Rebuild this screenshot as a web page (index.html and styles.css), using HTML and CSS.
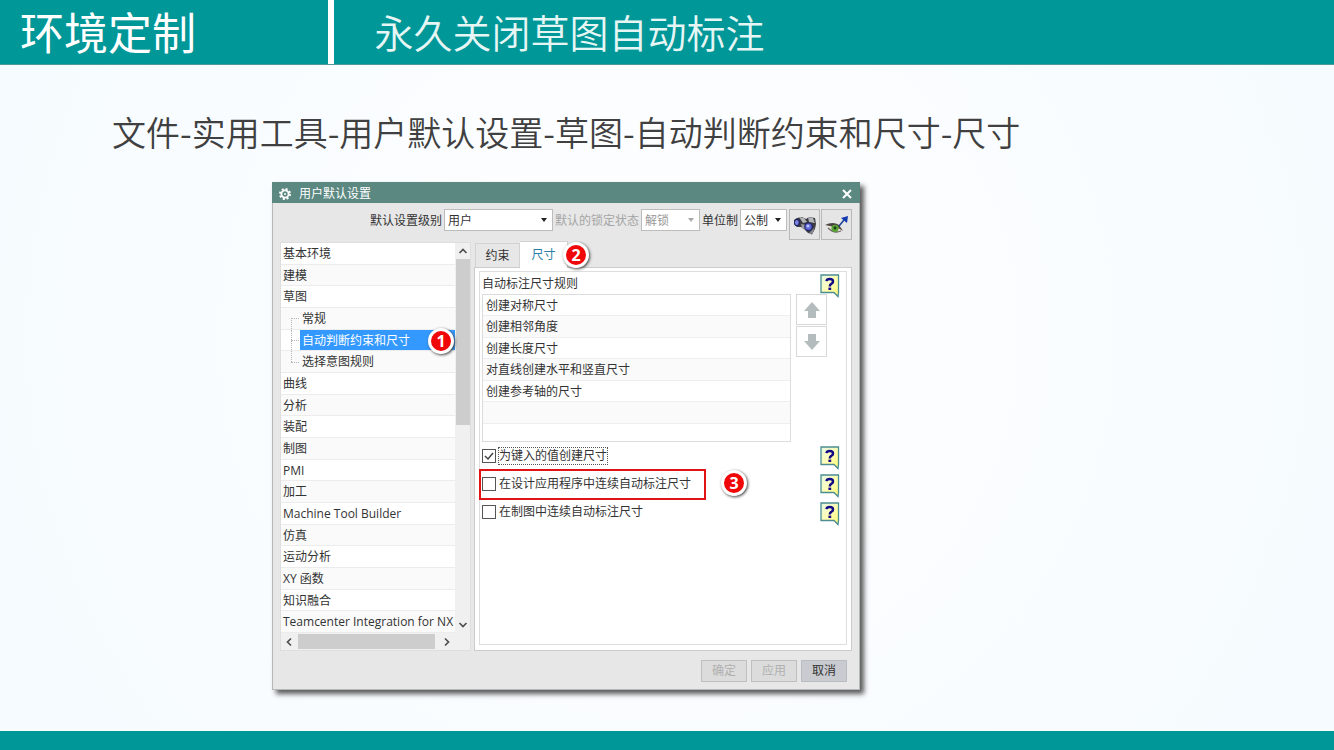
FILE: index.html
```html
<!DOCTYPE html>
<html lang="zh-CN">
<head>
    <meta charset="UTF-8">
    <meta name="viewport" content="width=device-width, initial-scale=1.0">
    <title>环境定制</title>
    <link rel="stylesheet" href="styles.css">
</head>
<body>
    <header class="topbar">
        <h1 class="section">环境定制</h1>
        <h2 class="topic">永久关闭草图自动标注</h2>
    </header>

    <main class="content">
        <p class="path">文件-实用工具-用户默认设置-草图-自动判断约束和尺寸-尺寸</p>

        <div class="dialog">
            <div class="titlebar">
                <svg class="gear" viewBox="0 0 14 14" width="14" height="14">
                    <circle cx="7" cy="7" r="5" fill="none" stroke="#fff" stroke-width="2" stroke-dasharray="2 1.93"/>
                    <circle cx="7" cy="7" r="3.6" fill="none" stroke="#fff" stroke-width="1.8"/>
                    <circle cx="7" cy="7" r="1" fill="#fff"/>
                </svg>
                <span class="title">用户默认设置</span>
                <button class="close" aria-label="关闭">
                    <svg viewBox="0 0 10 10" width="10" height="10"><path d="M1 1l8 8M9 1l-8 8" stroke="#fff" stroke-width="2"/></svg>
                </button>
            </div>

            <div class="toolbar">
                <label for="level">默认设置级别</label>
                <select id="level" class="wide"><option>用户</option></select>
                <label for="lock" class="off">默认的锁定状态</label>
                <select id="lock" class="medium" disabled><option>解锁</option></select>
                <label for="unit">单位制</label>
                <select id="unit" class="small"><option>公制</option></select>
                <div class="tools">
                    <button aria-label="查找">
                        <svg viewBox="0 0 24 22" width="24" height="22">
                            <path d="M1 6l3-2 5-1 4 2 3-2 6 1 1 6-1 5-3 5-4-1-4-4-3-2-4 0-3-3z" fill="#3c3d42"/>
                            <path d="M6 3l5 1 3 4-4 1zM15 3l5 1 2 5-6-1z" fill="#b4b6ba"/>
                            <path d="M8 10l5 1 0 6-4-3z" fill="#9a9b9f"/>
                            <path d="M17 18l5-5-3 8-3-2z" fill="#85868b"/>
                            <ellipse cx="4" cy="8.500" rx="3" ry="3.800" fill="#23255e"/>
                            <ellipse cx="3.800" cy="8.500" rx="1.900" ry="2.600" fill="#7a83e6"/>
                            <circle cx="15.500" cy="12.800" r="4.300" fill="#1d2062"/>
                            <circle cx="15.500" cy="12.800" r="3.200" fill="#5c66d8"/>
                            <circle cx="15" cy="12" r="1.500" fill="#bcc3ff"/>
                        </svg>
                    </button>
                    <button aria-label="显示">
                        <svg viewBox="0 0 24 22" width="24" height="22">
                            <path d="M2 13q6-4 13 0l3 3-3 0q-7 4-12-2z" fill="#e3ded2"/>
                            <path d="M0 11q8-4 14 0l4 6q-4-3-8-4-5-1-10-2z" fill="#4a423e"/>
                            <path d="M3 14q6 6 13 3" fill="none" stroke="#6e6661" stroke-width="1.300"/>
                            <circle cx="10" cy="14.300" r="3.600" fill="#5aa336"/>
                            <circle cx="10" cy="14" r="1.400" fill="#143c10"/>
                            <path d="M14 12l5-6" stroke="#1c3f94" stroke-width="1.500"/>
                            <path d="M16 4l7-2-1 7z" fill="#1238b0"/>
                        </svg>
                    </button>
                </div>
            </div>

            <div class="panes">
                <div class="tree">
                    <ul class="rows">
                        <li>基本环境</li>
                        <li>建模</li>
                        <li>草图</li>
                        <li class="child first"><span>常规</span></li>
                        <li class="child selected"><span>自动判断约束和尺寸</span><b class="badge one">1</b></li>
                        <li class="child last"><span>选择意图规则</span></li>
                        <li>曲线</li>
                        <li>分析</li>
                        <li>装配</li>
                        <li>制图</li>
                        <li>PMI</li>
                        <li>加工</li>
                        <li>Machine Tool Builder</li>
                        <li>仿真</li>
                        <li>运动分析</li>
                        <li>XY 函数</li>
                        <li>知识融合</li>
                        <li>Teamcenter Integration for NX</li>
                    </ul>
                    <div class="vscroll">
                        <svg viewBox="0 0 10 6" width="10" height="6"><path d="M1.500 5l3.500-3.500L8.500 5" fill="none" stroke="#505050" stroke-width="1.700"/></svg>
                        <div class="thumb"></div>
                        <svg viewBox="0 0 10 6" width="10" height="6"><path d="M1.500 1l3.500 3.500L8.500 1" fill="none" stroke="#505050" stroke-width="1.700"/></svg>
                    </div>
                    <div class="hscroll">
                        <svg viewBox="0 0 6 10" width="6" height="10"><path d="M5 1.500L1.500 5 5 8.500" fill="none" stroke="#505050" stroke-width="1.700"/></svg>
                        <div class="thumb"></div>
                        <svg viewBox="0 0 6 10" width="6" height="10"><path d="M1 1.500L4.500 5 1 8.500" fill="none" stroke="#505050" stroke-width="1.700"/></svg>
                    </div>
                </div>

                <div class="settings">
                    <div class="tabs">
                        <button class="tab">约束</button>
                        <button class="tab active">尺寸<b class="badge two">2</b></button>
                    </div>
                    <div class="sheet">
                        <div class="group">
                            <div class="line rules-title">
                                <span>自动标注尺寸规则</span>
                                <button class="help" aria-label="帮助"><svg viewBox="0 0 20 24" width="20" height="24"><use href="#help"/></svg></button>
                            </div>
                            <div class="rules">
                                <ul class="rule-list">
                                    <li>创建对称尺寸</li>
                                    <li>创建相邻角度</li>
                                    <li>创建长度尺寸</li>
                                    <li>对直线创建水平和竖直尺寸</li>
                                    <li>创建参考轴的尺寸</li>
                                    <li></li>
                                    <li></li>
                                </ul>
                                <div class="move">
                                    <button aria-label="上移"><svg viewBox="0 0 16 16" width="16" height="16"><path d="M8 0l8 9h-4v7H4V9H0z" fill="#b4bcbe"/></svg></button>
                                    <button aria-label="下移"><svg viewBox="0 0 16 16" width="16" height="16"><path d="M8 16l8-9h-4V0H4v7H0z" fill="#b4bcbe"/></svg></button>
                                </div>
                            </div>
                            <div class="line">
                                <input type="checkbox" id="typed" checked>
                                <label for="typed" class="focus">为键入的值创建尺寸</label>
                                <button class="help" aria-label="帮助"><svg viewBox="0 0 20 24" width="20" height="24"><use href="#help"/></svg></button>
                            </div>
                            <div class="line marked">
                                <input type="checkbox" id="design">
                                <label for="design">在设计应用程序中连续自动标注尺寸</label>
                                <b class="badge three">3</b>
                                <button class="help" aria-label="帮助"><svg viewBox="0 0 20 24" width="20" height="24"><use href="#help"/></svg></button>
                            </div>
                            <div class="line">
                                <input type="checkbox" id="drafting">
                                <label for="drafting">在制图中连续自动标注尺寸</label>
                                <button class="help" aria-label="帮助"><svg viewBox="0 0 20 24" width="20" height="24"><use href="#help"/></svg></button>
                            </div>
                        </div>
                    </div>
                </div>
            </div>

            <div class="actions">
                <button disabled>确定</button>
                <button disabled>应用</button>
                <button>取消</button>
            </div>
        </div>
    </main>

    <footer class="bottombar"></footer>

    <svg class="defs" width="0" height="0">
        <defs>
            <linearGradient id="note" x1="0" y1="0" x2="1" y2="1">
                <stop offset="0" stop-color="#e4f6e8"/>
                <stop offset="0.5" stop-color="#ffffb4"/>
                <stop offset="1" stop-color="#fff970"/>
            </linearGradient>
            <symbol id="help" viewBox="0 0 20 24">
                <path d="M1 1h17.500v17.500l-.5 4-4-4H1z" fill="url(#note)" stroke="#4b8d93" stroke-width="1.300"/>
                <path d="M6.500 7.200Q6.800 5 9.800 5q3.200 0 3.200 2.400 0 1.400-1.600 2.400Q9.800 10.800 9.800 12.400" fill="none" stroke="#120a84" stroke-width="2.500"/>
                <path d="M8.400 13.600h2.800v2.400H8.400z" fill="#120a84"/>
            </symbol>
        </defs>
    </svg>
</body>
</html>
```

FILE: styles.css
```css
*, *::before, *::after {
    box-sizing: border-box;
}

body {
    margin: 0;
    min-height: 100vh;
    display: flex;
    flex-direction: column;
    font-family: "Open Sans", "Noto Sans CJK SC", sans-serif;
    font-size: 12px;
    line-height: 20px;
    color: #333;
    background: radial-gradient(circle at 50% 45%, #fefeff 0, #fbfdff 35%, #f5fbff 100%);
}

button, select {
    font: inherit;
    color: inherit;
    margin: 0;
    padding: 0;
}

ul {
    list-style: none;
    margin: 0;
    padding: 0;
}

svg {
    display: block;
}

.defs {
    position: absolute;
}

/* slide header and footer */
.topbar {
    display: flex;
    height: 65px;
    background: #009798;
    border-bottom: 1px solid #4e9a9b;
    color: #fff;
    font-family: "Noto Sans CJK SC", sans-serif;
}

.topbar h1, .topbar h2 {
    margin: 0;
    font-weight: 350;
    line-height: 62px;
    white-space: nowrap;
}

.section {
    width: 25%;
    padding-left: 20px;
    border-right: 6px solid #fff;
    font-size: 44px;
}

.topbar .section {
    font-weight: 400;
}

.topic {
    padding-left: 41px;
    font-size: 39px;
    color: #e6f6f5;
}

.bottombar {
    height: 19px;
    background: #009798;
}

.content {
    flex: 1;
    padding: 42px 0 36px;
}

.path {
    margin: 0 0 25px 112px;
    font-family: "Noto Sans CJK SC", sans-serif;
    font-size: 34px;
    font-weight: 350;
    line-height: 50px;
    color: #404040;
}

/* dialog */
.dialog {
    width: 44%;
    min-width: 588px;
    margin-left: 272px;
    border: 1px solid #b4b8b8;
    border-top: 0;
    background: #e7e7e7;
    box-shadow: 4px 4px 5px #5a5a5a;
}

.titlebar {
    display: flex;
    align-items: center;
    height: 21px;
    margin: 0 -1px;
    padding: 2px 8px 0 6px;
    background: #5b8881;
    color: #fff;
}

.title {
    margin-left: 7px;
}

.close {
    margin-left: auto;
    border: 0;
    background: none;
}

.toolbar {
    display: flex;
    justify-content: flex-end;
    gap: 2px;
    padding: 6px 7px 0 0;
    height: 38px;
}

.toolbar label {
    line-height: 24px;
    white-space: nowrap;
}

.toolbar .off {
    color: #a5a5a5;
}

select {
    appearance: none;
    height: 22px;
    padding: 1px 0 0 3px;
    border: 1px solid #bcbcbc;
    border-radius: 0;
    background: #fff url("data:image/svg+xml,%3Csvg xmlns='http://www.w3.org/2000/svg' width='6' height='4'%3E%3Cpath d='M0 0h6L3 4z' fill='%23222'/%3E%3C/svg%3E") no-repeat right 5px center;
}

select:disabled {
    color: #999;
    opacity: 1;
    background-image: url("data:image/svg+xml,%3Csvg xmlns='http://www.w3.org/2000/svg' width='6' height='4'%3E%3Cpath d='M0 0h6L3 4z' fill='%23aaa'/%3E%3C/svg%3E");
}

.wide {
    width: 109px;
}

.medium {
    width: 59px;
}

.small {
    width: 47px;
}

.tools {
    display: flex;
    gap: 1px;
}

.tools button, .move button {
    display: flex;
    align-items: center;
    justify-content: center;
    width: 31px;
    height: 31px;
    border: 1px solid #b9b9b9;
    background: #e5e5e5;
}

.panes {
    display: grid;
    grid-template-columns: 191px 1fr;
    gap: 3px;
    padding: 0 7px;
}

/* left tree */
.tree {
    display: grid;
    grid-template-columns: 1fr 15px;
    grid-template-rows: 390px 17px;
    margin-top: 1px;
    border: 1px solid #dedede;
    background: #f0f0f0;
}

.rows {
    display: grid;
    grid-auto-rows: 1fr;
    min-width: 0;
}

.rows li {
    position: relative;
    padding: 1px 0 0 2px;
    border-bottom: 1px solid #ececec;
    background: #fff;
    line-height: 19px;
    white-space: nowrap;
}

.rows li:nth-child(even) {
    background: #fafafa;
}

.rows .child {
    padding: 0 0 0 19px;
}

.child span {
    display: block;
    height: 100%;
    padding: 1px 0 0 2px;
}

.selected span {
    background: #3399ff;
    color: #fff;
}

/* dotted branch lines */
.child::before {
    content: "";
    position: absolute;
    left: 10px;
    top: 0;
    bottom: 0;
    border-left: 1px dotted #b5b5b5;
}

.child::after {
    content: "";
    position: absolute;
    left: 10px;
    top: 50%;
    width: 8px;
    border-top: 1px dotted #b5b5b5;
}

.first::before {
    top: 50%;
}

.last::before {
    bottom: 50%;
}

.vscroll {
    display: flex;
    flex-direction: column;
    align-items: center;
    padding: 5px 0 5px;
}

.vscroll .thumb {
    width: 14px;
    height: 166px;
    margin: 5px 0 auto;
    background: #cdcdcd;
}

.hscroll {
    display: flex;
    align-items: center;
    gap: 6px;
    padding: 0 5px;
}

.hscroll .thumb {
    flex: 1;
    height: 15px;
    margin-right: 3px;
    background: #cdcdcd;
}

/* right side */
.settings {
    display: flex;
    flex-direction: column;
}

.tabs {
    display: flex;
    align-items: flex-end;
    padding-left: 1px;
}

.tab {
    position: relative;
    width: 45px;
    height: 24px;
    border: 1px solid #d2d2d2;
    border-bottom: 0;
    background: #e7e7e7;
}

.tab.active {
    z-index: 1;
    width: 48px;
    height: 27px;
    margin-bottom: -1px;
    border-left: 0;
    background: #fff;
    color: #2c7fa8;
}

.sheet {
    flex: 1;
    padding: 3px 4px 5px;
    border: 1px solid #ccc;
    background: #fff;
}

.group {
    height: 100%;
    padding: 0 4px 0 2px;
    border: 1px solid #dedede;
}

.line {
    position: relative;
    display: flex;
    align-items: center;
    height: 28px;
}

.rules-title {
    height: 22px;
    padding-top: 2px;
}

.help {
    margin: 4px 2px 0 auto;
    border: 0;
    background: none;
}

.rules {
    display: flex;
    gap: 5px;
    padding-right: 15px;
}

.rule-list {
    flex: 1;
    display: grid;
    grid-template-rows: repeat(6, 5fr) 4fr;
    height: 148px;
    border: 1px solid #dcdcdc;
}

.rule-list li {
    min-height: 0;
    padding: 2px 0 0 3px;
    border-bottom: 1px solid #eee;
    line-height: 18px;
}

.rule-list li:nth-child(even) {
    background: #fafafa;
}

.rule-list li:last-child {
    border-bottom: 0;
}

.move {
    display: flex;
    flex-direction: column;
    gap: 1px;
}

.move button {
    border-color: #d8d8d8;
    background: #fff;
}

input[type="checkbox"] {
    appearance: none;
    width: 14px;
    height: 14px;
    margin: 0 2px 0 0;
    border: 1px solid #555;
    background: #fff;
}

input[type="checkbox"]:checked {
    background: url("data:image/svg+xml,%3Csvg xmlns='http://www.w3.org/2000/svg' width='12' height='12'%3E%3Cpath d='M2 6l3 3 5-6' fill='none' stroke='%23444' stroke-width='1.500'/%3E%3C/svg%3E") no-repeat center;
}

.line label {
    line-height: 16px;
    border: 1px solid transparent;
}

.line .focus {
    border: 1px dotted #555;
}

/* red frame around the option to switch off */
.marked::after {
    content: "";
    position: absolute;
    left: -3px;
    top: -1px;
    width: 227px;
    height: 31px;
    border: 2px solid #e01414;
}

.badge {
    position: absolute;
    z-index: 2;
    width: 26px;
    height: 26px;
    border: 3px solid #fff;
    border-radius: 50%;
    background: #f00808;
    box-shadow: 1px 1px 3px #444;
    color: #fff;
    font-size: 16px;
    line-height: 20px;
    text-align: center;
}

.one {
    right: 1px;
    top: -2px;
}

.two {
    left: 43px;
    top: 0;
}

.three {
    left: 239px;
    top: 0;
}

.actions {
    display: flex;
    justify-content: flex-end;
    gap: 4px;
    padding: 9px 12px 7px;
}

.actions button {
    width: 46px;
    height: 22px;
    border: 1px solid #b9bcc0;
    background: #c9cbd0;
}

.actions button:disabled {
    border-color: #bfbfbf;
    background: #dcdcdc;
    color: #b0b0b0;
}
```
